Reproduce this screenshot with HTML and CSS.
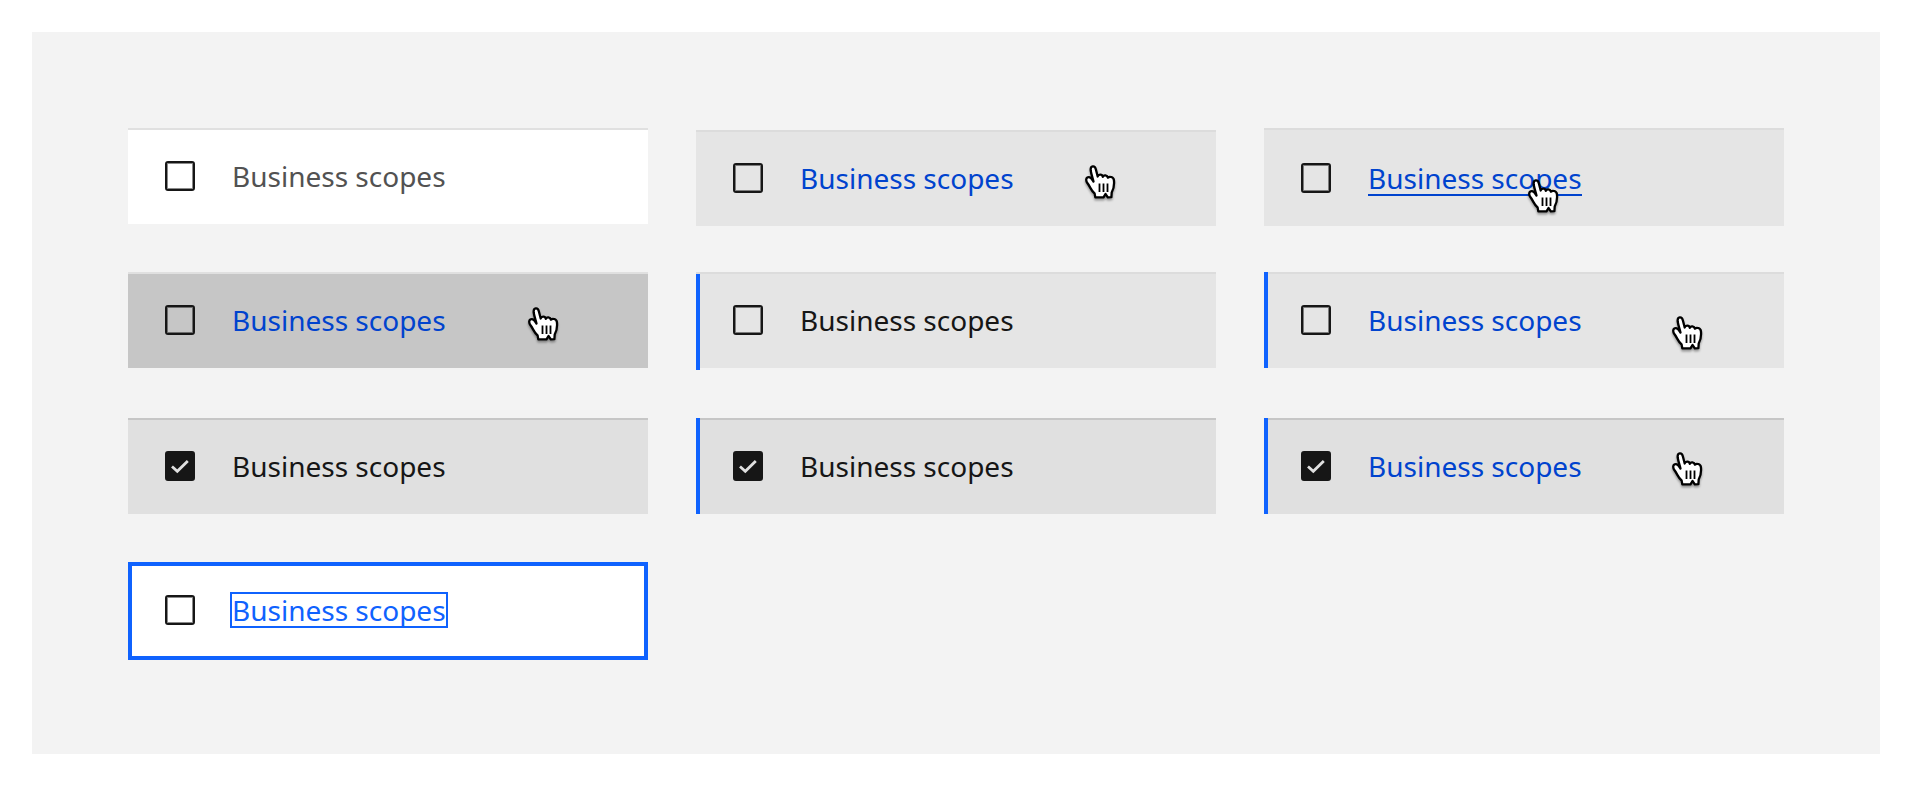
FILE: index.html
```html
<!DOCTYPE html>
<html lang="en">
<head>
<meta charset="utf-8">
<title>Selectable row states</title>
<link rel="stylesheet" href="styles.css">
</head>
<body>
<svg class="symbols" aria-hidden="true">
  <symbol id="hand" viewBox="0 0 32 36">
    <path d="M8.500 16.500 C7.500 12.500 6.200 9 5.700 5.500 C5.200 0.600 9.800 0 10.900 4.500 L12.700 11.500 C13.500 8.800 17.200 9 17.800 11.800 C18.800 9.600 22.200 10 22.900 12.600 C24.200 11.200 28.500 11.600 28.900 15 C29.500 20 28.900 23.500 26.700 27.500 L26.400 32.200 L22.800 32.400 L20.500 29 L18.500 32.400 L10.300 32.400 L9.600 28.500 C6.300 26 5.300 22 2.500 18.300 C0.300 15.200 1.100 12 3.900 12.100 C6 12.200 7.200 14.500 8.500 16.500 Z" fill="#fff" stroke="#000" stroke-width="2.300" stroke-linejoin="round"/>
    <path d="M14.500 18.500 V27 M18.500 18.500 V27 M22.500 18.500 V27" fill="none" stroke="#000" stroke-width="1.800"/>
  </symbol>
  <symbol id="tick" viewBox="0 0 30 30">
    <path d="M7 15.500 L12.300 20.300 L22.800 10" fill="none" stroke="currentColor" stroke-width="2.800"/>
  </symbol>
</svg>
<main class="panel">
  <div class="card card--enabled">
    <span class="check"><input type="checkbox" id="c1"></span>
    <label class="text" for="c1">Business scopes</label>
  </div>
  <div class="card card--hover card--low">
    <span class="check"><input type="checkbox" id="c2" aria-labelledby="t2"></span>
    <a class="text" id="t2" href="#">Business scopes</a>
    <svg class="cursor cursor--a" aria-hidden="true"><use href="#hand"/></svg>
  </div>
  <div class="card card--hover card--tall">
    <span class="check"><input type="checkbox" id="c3" aria-labelledby="t3"></span>
    <a class="text text--underline" id="t3" href="#">Business scopes</a>
    <svg class="cursor cursor--b" aria-hidden="true"><use href="#hand"/></svg>
  </div>

  <div class="card card--active">
    <span class="check"><input type="checkbox" id="c4" aria-labelledby="t4"></span>
    <a class="text" id="t4" href="#">Business scopes</a>
    <svg class="cursor cursor--c" aria-hidden="true"><use href="#hand"/></svg>
  </div>
  <div class="card card--hover card--bar card--bar-low">
    <span class="check"><input type="checkbox" id="c5"></span>
    <label class="text" for="c5">Business scopes</label>
  </div>
  <div class="card card--hover card--bar">
    <span class="check"><input type="checkbox" id="c6" aria-labelledby="t6"></span>
    <a class="text" id="t6" href="#">Business scopes</a>
    <svg class="cursor cursor--d" aria-hidden="true"><use href="#hand"/></svg>
  </div>

  <div class="card card--selected">
    <span class="check"><input type="checkbox" id="c7" checked><svg class="tick" aria-hidden="true"><use href="#tick"/></svg></span>
    <label class="text" for="c7">Business scopes</label>
  </div>
  <div class="card card--selected card--bar">
    <span class="check"><input type="checkbox" id="c8" checked><svg class="tick" aria-hidden="true"><use href="#tick"/></svg></span>
    <label class="text" for="c8">Business scopes</label>
  </div>
  <div class="card card--selected card--bar">
    <span class="check"><input type="checkbox" id="c9" checked aria-labelledby="t9"><svg class="tick" aria-hidden="true"><use href="#tick"/></svg></span>
    <a class="text" id="t9" href="#">Business scopes</a>
    <svg class="cursor cursor--e" aria-hidden="true"><use href="#hand"/></svg>
  </div>

  <div class="card card--focus">
    <span class="check"><input type="checkbox" id="c10" aria-labelledby="t10"></span>
    <a class="text text--focus" id="t10" href="#">Business scopes</a>
  </div>
</main>
</body>
</html>
```
FILE: styles.css
```css
* {
  box-sizing: border-box;
}

body {
  margin: 32px;
  background: #fff;
  color: #161616;
  font-family: "Noto Sans", "Open Sans", sans-serif;
  font-size: 28px;
  line-height: 32px;
}

.symbols {
  position: absolute;
  width: 0;
  height: 0;
}

.panel {
  display: grid;
  grid-template-columns: repeat(3, 1fr);
  grid-template-rows: minmax(98px, auto) minmax(100px, auto) minmax(98px, auto) auto;
  align-items: start;
  gap: 46px 48px;
  padding: 96px 96px 94px;
  background: #f3f3f3;
}

.card {
  position: relative;
  display: flex;
  align-items: center;
  gap: 37px;
  padding: 30px 37px 32px;
  border-top: 2px solid #dcdcdc;
}

.card--enabled {
  background: #fff;
  border-color: #e0e0e0;
  color: #525252;
}

.card--hover {
  background: #e5e5e5;
}

.card--low {
  align-self: end;
}

.card--tall {
  padding-top: 32px;
}

.card--active {
  background: #c6c6c6;
  border-color: #e0e0e0;
}

.card--selected {
  background: #e0e0e0;
  border-color: #c6c6c6;
}

.card--bar::before {
  content: "";
  position: absolute;
  top: -2px;
  bottom: 0;
  left: 0;
  width: 4px;
  background: #0f62fe;
}

.card--bar-low::before {
  top: 0;
  bottom: -2px;
}

.card--focus {
  padding: 28px 33px 30px;
  border: 4px solid #0f62fe;
  background: #fff;
}

.check {
  display: grid;
  flex: none;
}

.check input,
.tick {
  grid-area: 1 / 1;
  width: 30px;
  height: 30px;
  margin: 0;
}

.check input {
  appearance: none;
  border: 2px solid #161616;
  border-radius: 3px;
  box-shadow: inset 0 0 0 1px rgba(22, 22, 22, 0.5);
}

.check input:checked {
  background: #161616;
}

.tick {
  color: #e0e0e0;
  pointer-events: none;
}

.text {
  color: inherit;
  text-decoration: none;
  white-space: nowrap;
}

a.text {
  color: #0043ce;
}

.text--underline {
  box-shadow: 0 2px 0 #0043ce;
}

a.text--focus {
  color: #0f62fe;
  outline: 2px solid #0f62fe;
}

.cursor {
  position: absolute;
  width: 32px;
  height: 36px;
  filter: drop-shadow(0 2px 1px rgba(0, 0, 0, 0.35));
}

.cursor--a {
  top: 33px;
  left: 389px;
}

.cursor--b {
  top: 49px;
  left: 264px;
}

.cursor--c {
  top: 33px;
  left: 400px;
}

.cursor--d {
  top: 42px;
  left: 408px;
}

.cursor--e {
  top: 32px;
  left: 408px;
}
```
